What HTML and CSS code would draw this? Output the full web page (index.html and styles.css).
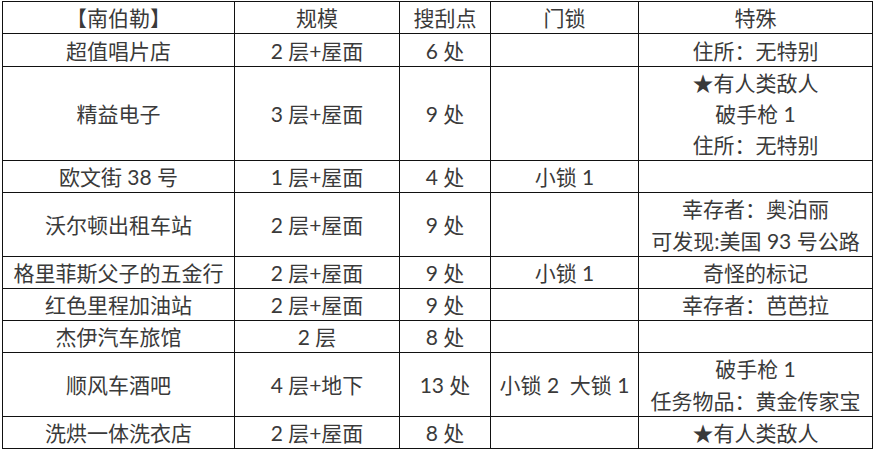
FILE: index.html
```html
<!DOCTYPE html>
<html lang="zh">
<head>
<meta charset="utf-8">
<link rel="stylesheet" href="styles.css">
</head>
<body>
<table class="grid">
  <colgroup>
    <col class="c1"><col class="c2"><col class="c3"><col class="c4"><col class="c5">
  </colgroup>
  <tr><td>【南伯勒】</td><td>规模</td><td>搜刮点</td><td>门锁</td><td>特殊</td></tr>
  <tr class="tall"><td>超值唱片店</td><td>2 层+屋面</td><td>6 处</td><td></td><td>住所：无特别</td></tr>
  <tr><td>精益电子</td><td>3 层+屋面</td><td>9 处</td><td></td><td>★有人类敌人<br>破手枪 1<br>住所：无特别</td></tr>
  <tr><td>欧文街 38 号</td><td>1 层+屋面</td><td>4 处</td><td>小锁 1</td><td></td></tr>
  <tr><td>沃尔顿出租车站</td><td>2 层+屋面</td><td>9 处</td><td></td><td class="two">幸存者：奥泊丽<br>可发现:美国 93 号公路</td></tr>
  <tr><td>格里菲斯父子的五金行</td><td>2 层+屋面</td><td>9 处</td><td>小锁 1</td><td>奇怪的标记</td></tr>
  <tr><td>红色里程加油站</td><td>2 层+屋面</td><td>9 处</td><td></td><td>幸存者：芭芭拉</td></tr>
  <tr><td>杰伊汽车旅馆</td><td>2 层</td><td>8 处</td><td></td><td></td></tr>
  <tr><td>顺风车酒吧</td><td>4 层+地下</td><td>13 处</td><td>小锁 2&nbsp;&nbsp;大锁 1</td><td class="two">破手枪 1<br>任务物品：黄金传家宝</td></tr>
  <tr><td>洗烘一体洗衣店</td><td>2 层+屋面</td><td>8 处</td><td></td><td>★有人类敌人</td></tr>
</table>
</body>
</html>
```
FILE: styles.css
```css
html, body {
  margin: 0;
  padding: 0;
  background: #ffffff;
}
body {
  padding: 1px 0 0 2px;
  font-family: Lato, "Noto Sans CJK SC", sans-serif;
  color: #3a3a3a;
}
.grid {
  border-collapse: collapse;
  table-layout: fixed;
  width: 870px;
}
.c1 { width: 232px; }
.c2 { width: 165px; }
.c3 { width: 91px; }
.c4 { width: 148px; }
.c5 { width: 234px; }
.grid td {
  border: 1px solid #111;
  padding: 0;
  text-align: center;
  vertical-align: middle;
  font-size: 21px;
  line-height: 31px;
  height: 31px;
  white-space: nowrap;
}
.grid .tall td {
  height: 32px;
}
.grid td.two {
  line-height: 31.5px;
}
```
